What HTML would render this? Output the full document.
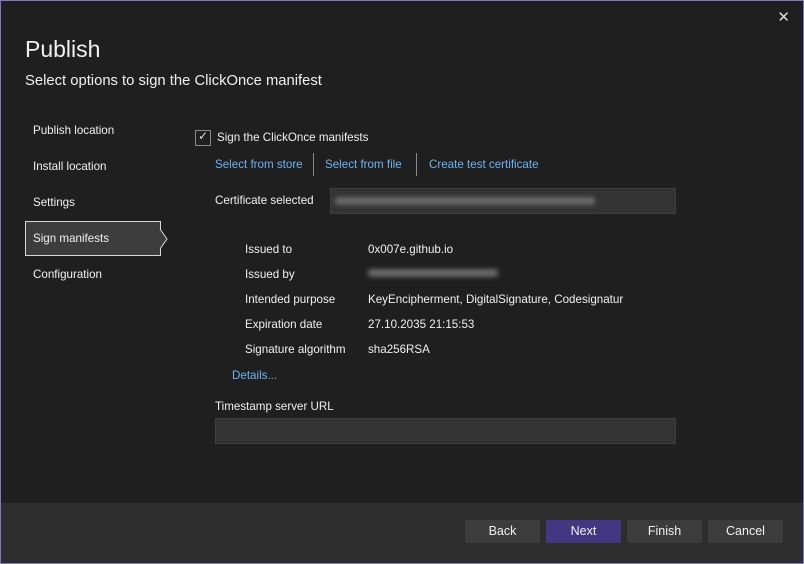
<!DOCTYPE html>
<html><head><meta charset="utf-8"><style>
*{margin:0;padding:0;box-sizing:border-box}
body{width:804px;height:564px;overflow:hidden;background:#1f1f1f;font-family:"Segoe UI","Liberation Sans",sans-serif;color:#f0f0f0;font-size:11.6px;position:relative}
.frame{position:absolute;left:0;top:0;width:804px;height:564px;border:1px solid #7f76c8;pointer-events:none;z-index:5}
.a{position:absolute;white-space:nowrap}
.link{color:#6cb4f0}
.sep{position:absolute;width:1px;height:23px;background:#8a8a8a;top:153px}
.box{position:absolute;background:#333;border:1px solid #3e3e3e}
.blur{position:absolute;background:#6a6a6a;filter:blur(2.5px);height:8px;border-radius:3px}
.btn{position:absolute;top:520px;width:75px;height:23px;background:#3c3c3c;text-align:center;line-height:23px;font-size:12.5px}
</style></head><body>
<div class="frame"></div>
<div class="a" style="right:14px;top:8px;font-size:15px;color:#ddd">✕</div>
<div class="a" style="left:25px;top:36px;font-size:23px;font-weight:300">Publish</div>
<div class="a" style="left:25px;top:73px;font-size:14.8px">Select options to sign the ClickOnce manifest</div>
<div class="a" style="left:33px;top:124px">Publish location</div>
<div class="a" style="left:33px;top:160px">Install location</div>
<div class="a" style="left:33px;top:196px">Settings</div>
<div style="position:absolute;left:25px;top:221px;width:136px;height:35px;background:#3d3d3d;border:1px solid #d8d8d8"></div>
<svg style="position:absolute;left:159px;top:229px" width="10" height="20"><path d="M1 0 L8 10 L1 20" fill="#3d3d3d" stroke="#d8d8d8"/></svg>
<div class="a" style="left:33px;top:232px">Sign manifests</div>
<div class="a" style="left:33px;top:268px">Configuration</div>
<div style="position:absolute;left:195px;top:130px;width:16px;height:16px;border:1px solid #8a8a8a"></div>
<div class="a" style="left:198px;top:129px;font-size:12px;color:#ddd">✓</div>
<div class="a" style="left:217px;top:131px">Sign the ClickOnce manifests</div>
<div class="a link" style="left:215px;top:158px">Select from store</div>
<div class="sep" style="left:313px"></div>
<div class="a link" style="left:325px;top:158px">Select from file</div>
<div class="sep" style="left:416px"></div>
<div class="a link" style="left:429px;top:158px">Create test certificate</div>
<div class="a" style="left:215px;top:194px">Certificate selected</div>
<div class="box" style="left:330px;top:188px;width:346px;height:26px"></div>
<div class="blur" style="left:335px;top:197px;width:260px"></div>
<div class="a" style="left:245px;top:243px">Issued to</div>
<div class="a" style="left:368px;top:243px">0x007e.github.io</div>
<div class="a" style="left:245px;top:268px">Issued by</div>
<div class="blur" style="left:368px;top:269px;width:130px"></div>
<div class="a" style="left:245px;top:293px">Intended purpose</div>
<div class="a" style="left:368px;top:293px">KeyEncipherment, DigitalSignature, Codesignatur</div>
<div class="a" style="left:245px;top:318px">Expiration date</div>
<div class="a" style="left:368px;top:318px">27.10.2035 21:15:53</div>
<div class="a" style="left:245px;top:343px">Signature algorithm</div>
<div class="a" style="left:368px;top:343px">sha256RSA</div>
<div class="a link" style="left:232px;top:369px">Details...</div>
<div class="a" style="left:215px;top:400px">Timestamp server URL</div>
<div class="box" style="left:215px;top:418px;width:461px;height:26px"></div>
<div style="position:absolute;left:0;top:503px;width:804px;height:61px;background:#2d2d2d"></div>
<div class="btn" style="left:465px">Back</div>
<div class="btn" style="left:546px;background:#433782">Next</div>
<div class="btn" style="left:627px">Finish</div>
<div class="btn" style="left:708px">Cancel</div>
</body></html>
